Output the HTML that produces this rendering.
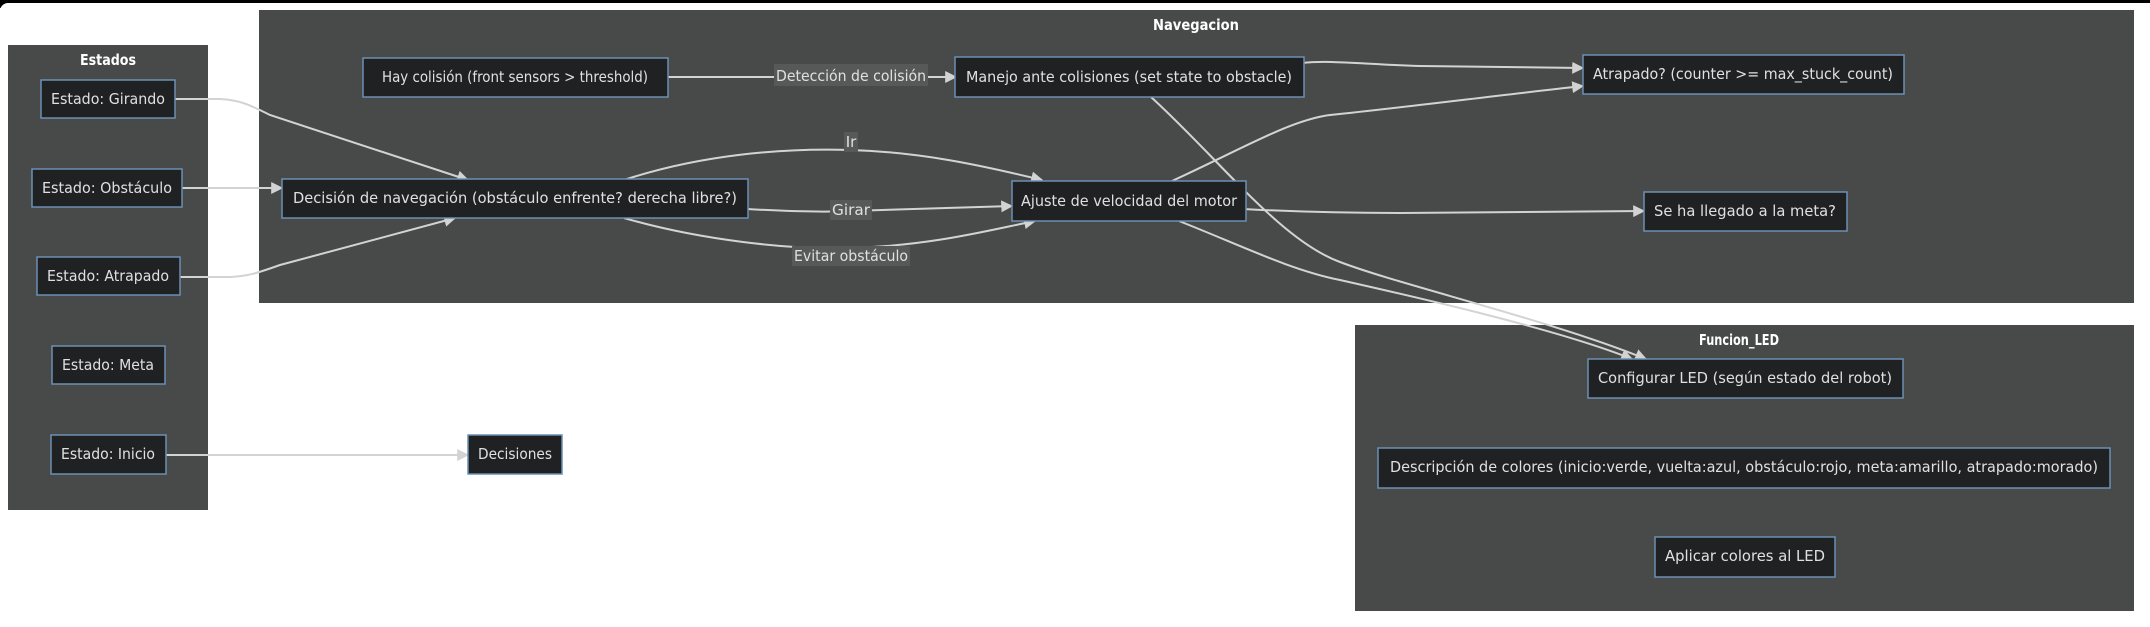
<!DOCTYPE html>
<html><head><meta charset="utf-8"><style>
html,body{margin:0;padding:0;background:#fff;width:2150px;height:627px;overflow:hidden}
svg{display:block}
text{font-family:"DejaVu Sans","Liberation Sans",sans-serif;fill:#e0e0e0}
.t{fill:#fff;font-weight:bold}
.c{fill:#484949}
.n{fill:#1f2122;stroke:#6b8fb3;stroke-width:1.5}
.e{fill:none;stroke:#d3d3d3;stroke-width:2}
.lb{fill:#575858}
</style></head><body>
<svg width="2150" height="627" viewBox="0 0 2150 627" xmlns="http://www.w3.org/2000/svg">
<defs><marker id="a" viewBox="0 0 10 10" refX="9" refY="5" markerWidth="6" markerHeight="6" orient="auto"><path d="M0,0L10,5L0,10z" fill="#d3d3d3"/></marker></defs>
<rect x="0" y="0" width="2150" height="3" fill="#000"/>
<rect x="0" y="0" width="8" height="8" fill="#000"/>
<rect x="0" y="0" width="2150" height="627" rx="8" fill="#fff" transform="translate(0,3)"/>
<rect class="c" x="8" y="45" width="200" height="465"/>
<rect class="c" x="259" y="10" width="1875" height="293"/>
<rect class="c" x="1355" y="325" width="779" height="286"/>
<text class="t" x="108" y="65" text-anchor="middle" font-size="15" textLength="56" lengthAdjust="spacingAndGlyphs">Estados</text>
<text class="t" x="1196" y="30" text-anchor="middle" font-size="15" textLength="86" lengthAdjust="spacingAndGlyphs">Navegacion</text>
<text class="t" x="1739" y="345" text-anchor="middle" font-size="15" textLength="80" lengthAdjust="spacingAndGlyphs">Funcion_LED</text>

<path class="e" d="M175,99 L220,99 C240,100 250,105 270,115 L468,180" marker-end="url(#a)"/>
<path class="e" d="M182,188 L282,188" marker-end="url(#a)"/>
<path class="e" d="M180,277 L230,277 C250,276 260,272 280,265 L455,218" marker-end="url(#a)"/>
<path class="e" d="M166,455 L468,455" marker-end="url(#a)"/>
<path class="e" d="M668,77 L956,77" marker-end="url(#a)"/>
<path class="e" d="M1302,63 C1330,60 1360,64 1420,66 L1583,68" marker-end="url(#a)"/>
<path class="e" d="M1151,97 C1220,160 1280,240 1340,262 C1400,285 1550,320 1646,359" marker-end="url(#a)"/>
<path class="e" d="M624,180 C700,155 780,148 850,150 C920,152 980,165 1042,180" marker-end="url(#a)"/>
<path class="e" d="M747,209 C800,212 830,212 850,211 L1012,206" marker-end="url(#a)"/>
<path class="e" d="M624,218 C700,240 790,250 850,248 C930,246 990,230 1035,221" marker-end="url(#a)"/>
<path class="e" d="M1172,181 C1240,150 1290,120 1330,115 C1400,108 1500,95 1583,86" marker-end="url(#a)"/>
<path class="e" d="M1243,209 C1300,212 1340,213 1400,213 L1644,211" marker-end="url(#a)"/>
<path class="e" d="M1179,221 C1240,245 1290,270 1340,280 C1420,298 1560,330 1632,359" marker-end="url(#a)"/>

<rect class="lb" x="774" y="64" width="154" height="22"/>
<text x="851" y="81" text-anchor="middle" font-size="15" textLength="150" lengthAdjust="spacingAndGlyphs">Detección de colisión</text>
<rect class="lb" x="844" y="132" width="14" height="20"/>
<text x="851" y="147" text-anchor="middle" font-size="15">Ir</text>
<rect class="lb" x="830" y="200" width="42" height="20"/>
<text x="851" y="215" text-anchor="middle" font-size="15" textLength="38" lengthAdjust="spacingAndGlyphs">Girar</text>
<rect class="lb" x="792" y="246" width="118" height="20"/>
<text x="851" y="261" text-anchor="middle" font-size="15" textLength="114" lengthAdjust="spacingAndGlyphs">Evitar obstáculo</text>

<g font-size="15">
<rect class="n" x="41" y="80" width="134" height="38"/><text x="108" y="104" text-anchor="middle" textLength="114" lengthAdjust="spacingAndGlyphs">Estado: Girando</text>
<rect class="n" x="32" y="169" width="150" height="38"/><text x="107" y="193" text-anchor="middle" textLength="130" lengthAdjust="spacingAndGlyphs">Estado: Obstáculo</text>
<rect class="n" x="37" y="257" width="143" height="38"/><text x="108" y="281" text-anchor="middle" textLength="122" lengthAdjust="spacingAndGlyphs">Estado: Atrapado</text>
<rect class="n" x="52" y="346" width="113" height="38"/><text x="108" y="370" text-anchor="middle" textLength="92" lengthAdjust="spacingAndGlyphs">Estado: Meta</text>
<rect class="n" x="51" y="435" width="115" height="39"/><text x="108" y="459" text-anchor="middle" textLength="94" lengthAdjust="spacingAndGlyphs">Estado: Inicio</text>
<rect class="n" x="468" y="435" width="94" height="39"/><text x="515" y="459" text-anchor="middle" textLength="74" lengthAdjust="spacingAndGlyphs">Decisiones</text>
<rect class="n" x="363" y="58" width="305" height="39"/><text x="515" y="82" text-anchor="middle" textLength="266" lengthAdjust="spacingAndGlyphs">Hay colisión (front sensors &gt; threshold)</text>
<rect class="n" x="955" y="57" width="349" height="40"/><text x="1129" y="82" text-anchor="middle" textLength="326" lengthAdjust="spacingAndGlyphs">Manejo ante colisiones (set state to obstacle)</text>
<rect class="n" x="1583" y="55" width="321" height="39"/><text x="1743" y="79" text-anchor="middle" textLength="300" lengthAdjust="spacingAndGlyphs">Atrapado? (counter &gt;= max_stuck_count)</text>
<rect class="n" x="282" y="179" width="466" height="39"/><text x="515" y="203" text-anchor="middle" textLength="444" lengthAdjust="spacingAndGlyphs">Decisión de navegación (obstáculo enfrente? derecha libre?)</text>
<rect class="n" x="1012" y="181" width="234" height="40"/><text x="1129" y="206" text-anchor="middle" textLength="216" lengthAdjust="spacingAndGlyphs">Ajuste de velocidad del motor</text>
<rect class="n" x="1644" y="192" width="203" height="39"/><text x="1745" y="216" text-anchor="middle" textLength="182" lengthAdjust="spacingAndGlyphs">Se ha llegado a la meta?</text>
<rect class="n" x="1588" y="359" width="315" height="39"/><text x="1745" y="383" text-anchor="middle" textLength="294" lengthAdjust="spacingAndGlyphs">Configurar LED (según estado del robot)</text>
<rect class="n" x="1378" y="448" width="732" height="40"/><text x="1744" y="472" text-anchor="middle" textLength="708" lengthAdjust="spacingAndGlyphs">Descripción de colores (inicio:verde, vuelta:azul, obstáculo:rojo, meta:amarillo, atrapado:morado)</text>
<rect class="n" x="1655" y="537" width="180" height="40"/><text x="1745" y="561" text-anchor="middle" textLength="160" lengthAdjust="spacingAndGlyphs">Aplicar colores al LED</text>
</g>
</svg>
</body></html>
